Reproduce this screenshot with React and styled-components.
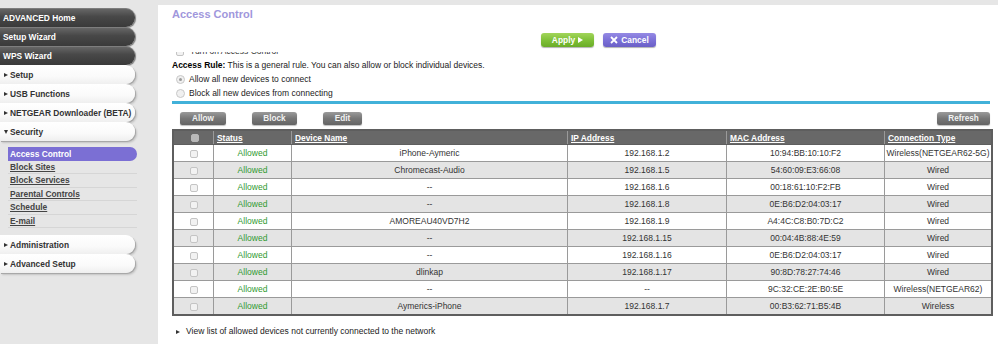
import styled, { createGlobalStyle, css } from "styled-components";

const GlobalStyle = createGlobalStyle`
  html, body {
    margin: 0;
    padding: 0;
    background: #e6e6e6;
    font-family: "Liberation Sans", Arial, sans-serif;
    font-size: 8.5px;
    color: #333;
  }
`;

const Page = styled.div`
  display: flex;
  width: 998px;
  height: 344px;
  overflow: hidden;
`;

const Sidebar = styled.div`
  width: 158px;
  flex-shrink: 0;
  padding-top: 8px;
  box-sizing: border-box;
`;

const pill = css`
  width: 135px;
  height: 19px;
  box-sizing: border-box;
  border-radius: 0 9px 9px 0;
  display: flex;
  align-items: center;
  font-weight: bold;
  font-size: 8.4px;
`;

const DarkPill = styled.div`
  ${pill};
  padding-left: 3px;
  color: #fff;
  background: linear-gradient(#6a6a6a, #484848 45%, #3a3a3a);
  box-shadow: 1px 1px 1px rgba(0, 0, 0, 0.45), inset 0 1px 0 rgba(255, 255, 255, 0.15);
`;

const LightPill = styled.div`
  ${pill};
  padding-left: 4px;
  color: #333;
  background: linear-gradient(#fff, #fafafa 60%, #efefef);
  box-shadow: 1px 1px 0 #a8a8a8, 2px 2px 2px rgba(0, 0, 0, 0.15);
`;

const Caret = styled.span`
  display: inline-block;
  width: 0;
  height: 0;
  margin-right: 2px;
  ${(p) =>
    p.$down
      ? css`
          border-left: 2.5px solid transparent;
          border-right: 2.5px solid transparent;
          border-top: 4px solid #333;
        `
      : css`
          border-top: 2.5px solid transparent;
          border-bottom: 2.5px solid transparent;
          border-left: 4px solid #333;
        `}
`;

const SubMenu = styled.div`
  margin: 6px 0 7px 8px;
  width: 129px;
`;

const SubItem = styled.div`
  height: 13.5px;
  box-sizing: border-box;
  display: flex;
  align-items: center;
  padding-left: 2px;
  font-weight: bold;
  font-size: 8.4px;
  ${(p) =>
    p.$active
      ? css`
          color: #fff;
          background: #7b6fd4;
          border-radius: 0 7px 7px 0;
        `
      : css`
          color: #444;
          text-decoration: underline;
          border-bottom: 1px solid #d6d6d6;
        `}
`;

const Content = styled.div`
  flex: 1;
  background: #fff;
  margin-top: 5px;
  padding: 0 8px 0 14px;
`;

const Title = styled.div`
  margin-top: 2px;
  line-height: 14px;
  font-size: 11px;
  font-weight: bold;
  color: #a097dc;
`;

const ApplyRow = styled.div`
  display: flex;
  gap: 9px;
  margin: 12px 0 0 369px;
`;

const ColorButton = styled.div`
  width: 53px;
  height: 14px;
  border-radius: 3px;
  display: flex;
  align-items: center;
  justify-content: center;
  gap: 3px;
  color: #fff;
  font-weight: bold;
  font-size: 8.4px;
  box-shadow: 0 1px 1px rgba(0, 0, 0, 0.3);
  background: ${(p) =>
    p.$tone === "green"
      ? "linear-gradient(#a2d55a, #7dbf36 55%, #6aac28)"
      : "linear-gradient(#958ae4, #7a6fd6 55%, #6a5fc6)"};
`;

const PlayTri = styled.span`
  width: 0;
  height: 0;
  border-top: 3px solid transparent;
  border-bottom: 3px solid transparent;
  border-left: 5px solid #fff;
`;

const ClipRow = styled.div`
  margin-top: 5px;
  height: 5px;
  overflow: hidden;
`;

const ClipInner = styled.div`
  margin-top: -7px;
  display: flex;
  align-items: center;
  gap: 6px;
  line-height: 13px;
  padding-left: 4px;
`;

const SmallBox = styled.span`
  display: inline-block;
  vertical-align: middle;
  width: 8px;
  height: 8px;
  box-sizing: border-box;
  border: 1px solid ${(p) => (p.$dark ? "#b8b8b8" : "#c4c4c4")};
  border-radius: 2px;
  background: ${(p) => (p.$dark ? "#b8b8b8" : "#f2f2f2")};
`;

const RuleLine = styled.div`
  margin-top: 2px;
  line-height: 13px;
  color: #222;
  b {
    color: #000;
  }
`;

const RadioRow = styled.label`
  display: flex;
  align-items: center;
  gap: 4px;
  height: 14px;
  padding-left: 4px;
  color: #222;
`;

const Radio = styled.span`
  width: 9px;
  height: 9px;
  box-sizing: border-box;
  border-radius: 50%;
  border: 1px solid #c8c8c8;
  background: #f0f0f0;
  display: flex;
  align-items: center;
  justify-content: center;
  &::after {
    content: "";
    width: 3px;
    height: 3px;
    border-radius: 50%;
    background: ${(p) => (p.$checked ? "#9a9a9a" : "transparent")};
  }
`;

const Divider = styled.div`
  margin-top: 0.5px;
  height: 3px;
  width: 818px;
  background: #41b1d9;
`;

const ActionRow = styled.div`
  display: flex;
  align-items: center;
  margin-top: 8.5px;
  padding-left: 8px;
  width: 818px;
  box-sizing: border-box;
  gap: 26px;
`;

const GrayButton = styled.div`
  width: ${(p) => p.$w}px;
  height: 13px;
  border-radius: 3px 3px 2px 2px;
  display: flex;
  align-items: center;
  justify-content: center;
  color: #f2f2f2;
  font-weight: bold;
  font-size: 8.2px;
  background: linear-gradient(#9a9a9a, #777 50%, #646464);
  box-shadow: 0 1px 1px rgba(0, 0, 0, 0.25);
  ${(p) => p.$right && "margin-left: auto;"}
`;

const Table = styled.table`
  margin-top: 4px;
  width: 818px;
  table-layout: fixed;
  border-collapse: collapse;
  border: 2px solid #5e5e5e;
`;

const HeadCell = styled.th`
  width: ${(p) => p.$w - 4}px;
  height: 13px;
  padding: 0 0 0 3px;
  background: #686868;
  color: #fff;
  font-weight: bold;
  font-size: 8.4px;
  text-align: ${(p) => (p.$center ? "center" : "left")};
  text-decoration: underline;
  border: 1px solid #9a9a9a;
  border-top: none;
  border-bottom: 1px solid #5e5e5e;
  white-space: nowrap;
  overflow: hidden;
`;

const Row = styled.tr`
  background: ${(p) => (p.$alt ? "#e4e4e4" : "#fff")};
`;

const Cell = styled.td`
  height: 16px;
  padding: 0;
  text-align: center;
  white-space: nowrap;
  overflow: hidden;
  color: ${(p) => (p.$green ? "#2f9a2f" : "#333")};
  border: 1px solid #9a9a9a;
`;

const MoreLink = styled.div`
  margin-top: 9px;
  padding-left: 4px;
  line-height: 13px;
  display: flex;
  align-items: center;
  gap: 4px;
  color: #222;
`;

const devices = [
  ["iPhone-Aymeric", "192.168.1.2", "10:94:BB:10:10:F2", "Wireless(NETGEAR62-5G)"],
  ["Chromecast-Audio", "192.168.1.5", "54:60:09:E3:66:08", "Wired"],
  ["--", "192.168.1.6", "00:18:61:10:F2:FB", "Wired"],
  ["--", "192.168.1.8", "0E:B6:D2:04:03:17", "Wired"],
  ["AMOREAU40VD7H2", "192.168.1.9", "A4:4C:C8:B0:7D:C2", "Wired"],
  ["--", "192.168.1.15", "00:04:4B:88:4E:59", "Wired"],
  ["--", "192.168.1.16", "0E:B6:D2:04:03:17", "Wired"],
  ["dlinkap", "192.168.1.17", "90:8D:78:27:74:46", "Wired"],
  ["--", "--", "9C:32:CE:2E:B0:5E", "Wireless(NETGEAR62)"],
  ["Aymerics-iPhone", "192.168.1.7", "00:B3:62:71:B5:4B", "Wireless"],
];

function CrossIcon() {
  return (
    <svg width="8" height="8" viewBox="0 0 8 8">
      <path d="M1 1 L7 7 M7 1 L1 7" stroke="#fff" strokeWidth="1.8" />
    </svg>
  );
}

export default function App() {
  return (
    <Page>
      <GlobalStyle />
      <Sidebar>
        <DarkPill>ADVANCED Home</DarkPill>
        <DarkPill>Setup Wizard</DarkPill>
        <DarkPill>WPS Wizard</DarkPill>
        <LightPill><Caret />Setup</LightPill>
        <LightPill><Caret />USB Functions</LightPill>
        <LightPill><Caret />NETGEAR Downloader (BETA)</LightPill>
        <LightPill><Caret $down />Security</LightPill>
        <SubMenu>
          <SubItem $active>Access Control</SubItem>
          <SubItem>Block Sites</SubItem>
          <SubItem>Block Services</SubItem>
          <SubItem>Parental Controls</SubItem>
          <SubItem>Schedule</SubItem>
          <SubItem>E-mail</SubItem>
        </SubMenu>
        <LightPill><Caret />Administration</LightPill>
        <LightPill><Caret />Advanced Setup</LightPill>
      </Sidebar>

      <Content>
        <Title>Access Control</Title>
        <ApplyRow>
          <ColorButton $tone="green">Apply <PlayTri /></ColorButton>
          <ColorButton $tone="purple"><CrossIcon />Cancel</ColorButton>
        </ApplyRow>
        <ClipRow>
          <ClipInner><SmallBox />Turn on Access Control</ClipInner>
        </ClipRow>
        <RuleLine>
          <b>Access Rule:</b> This is a general rule. You can also allow or block individual devices.
        </RuleLine>
        <RadioRow><Radio $checked />Allow all new devices to connect</RadioRow>
        <RadioRow><Radio />Block all new devices from connecting</RadioRow>
        <Divider />
        <ActionRow>
          <GrayButton $w={46}>Allow</GrayButton>
          <GrayButton $w={45}>Block</GrayButton>
          <GrayButton $w={39}>Edit</GrayButton>
          <GrayButton $w={53} $right>Refresh</GrayButton>
        </ActionRow>
        <Table>
          <thead>
            <tr>
              <HeadCell $w={40} $center><SmallBox $dark /></HeadCell>
              <HeadCell $w={78}>Status</HeadCell>
              <HeadCell $w={276}>Device Name</HeadCell>
              <HeadCell $w={159}>IP Address</HeadCell>
              <HeadCell $w={158}>MAC Address</HeadCell>
              <HeadCell $w={107}>Connection Type</HeadCell>
            </tr>
          </thead>
          <tbody>
            {devices.map((d, i) => (
              <Row key={i} $alt={i % 2 === 1}>
                <Cell><SmallBox /></Cell>
                <Cell $green>Allowed</Cell>
                <Cell>{d[0]}</Cell>
                <Cell>{d[1]}</Cell>
                <Cell>{d[2]}</Cell>
                <Cell>{d[3]}</Cell>
              </Row>
            ))}
          </tbody>
        </Table>
        <MoreLink><Caret />View list of allowed devices not currently connected to the network</MoreLink>
      </Content>
    </Page>
  );
}
